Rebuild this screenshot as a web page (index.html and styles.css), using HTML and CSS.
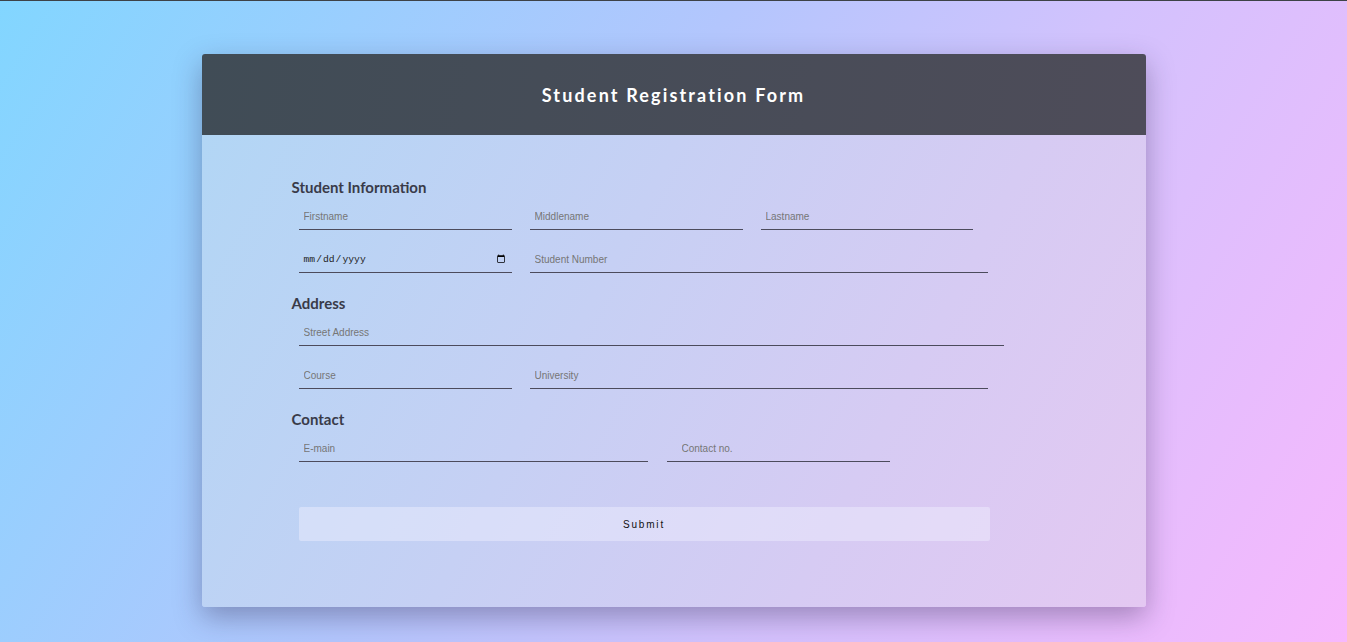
FILE: index.html
```html
<!DOCTYPE html>
<html lang="en">
<head>
<meta charset="utf-8">
<title>Student Registration Form</title>
<link rel="stylesheet" href="styles.css">
</head>
<body>
<div class="page">
  <div class="card">
    <div class="card-head">
      <h1 class="title">Student Registration Form</h1>
    </div>
    <form class="card-body">
      <h2 class="section">Student Information</h2>
      <div class="row">
        <input class="field w213" type="text" placeholder="Firstname">
        <input class="field w213" type="text" placeholder="Middlename">
        <input class="field w212" type="text" placeholder="Lastname">
      </div>
      <div class="row">
        <input class="field date w213" type="date">
        <input class="field w458" type="text" placeholder="Student Number">
      </div>
      <h2 class="section">Address</h2>
      <div class="row">
        <input class="field w705" type="text" placeholder="Street Address">
      </div>
      <div class="row">
        <input class="field w213" type="text" placeholder="Course">
        <input class="field w458" type="text" placeholder="University">
      </div>
      <h2 class="section">Contact</h2>
      <div class="row row-contact">
        <input class="field w349" type="text" placeholder="E-main">
        <input class="field field-wide-pad w223" type="text" placeholder="Contact no.">
      </div>
      <button class="submit" type="button">Submit</button>
    </form>
  </div>
</div>
</body>
</html>
```
FILE: styles.css
```css
* { box-sizing: border-box; }
html, body { margin: 0; padding: 0; }
body {
  border-top: 1px solid #3d4247;
  min-height: 642px;
  background: linear-gradient(122deg, #82d6ff 0%, #b3c6fd 42%, #d2c2fd 64%, #f7b8fd 100%);
  font-family: "Liberation Sans", Arial, sans-serif;
}
.page {
  padding-top: 53px;
  padding-bottom: 35px;
}
.card {
  width: 944px;
  margin: 0 auto;
  border-radius: 3px;
  overflow: hidden;
  box-shadow: 0 10px 28px rgba(40, 30, 70, 0.35);
}
.card-head {
  height: 81px;
  display: flex;
  align-items: center;
  justify-content: center;
  background: linear-gradient(100deg, #404c56 0%, #4e4c59 100%);
}
.title {
  margin: 0;
  color: #ffffff;
  font-family: "Lato", "Open Sans", sans-serif;
  font-weight: 700;
  font-size: 18px;
  letter-spacing: 2.15px;
}
.card-body {
  display: flex;
  flex-direction: column;
  align-items: flex-start;
  height: 472px;
  padding: 43px 0 0 90px;
  background: linear-gradient(118deg, #b2d6f5 0%, #c6d0f4 40%, #d6cbf3 70%, #e4c8f2 100%);
}
.section {
  margin: 0 0 7px 0;
  height: 18px;
  line-height: 18px;
  font-family: "Lato", "Open Sans", sans-serif;
  font-weight: 700;
  font-size: 15px;
  color: #393b49;
}
.row {
  display: flex;
  gap: 18px;
  margin-left: 7px;
  margin-bottom: 16px;
}
.row + .section { margin-top: 5px; }
.row-contact { gap: 19px; margin-bottom: 0; }
.field {
  height: 27px;
  padding: 0 5px;
  border: none;
  border-bottom: 1px solid #4c4b5c;
  background: transparent;
  font-family: "Liberation Sans", Arial, sans-serif;
  font-size: 10px;
  color: #333;
  outline: none;
}
.field-wide-pad { padding-left: 15px; }
.field::placeholder { color: #767676; }
.date {
  font-family: "Liberation Mono", monospace;
  font-size: 9.7px;
  color: #222;
  padding-left: 4px;
  padding-right: 4px;
}
.w212 { width: 212px; }
.w213 { width: 213px; }
.w223 { width: 223px; }
.w349 { width: 349px; }
.w458 { width: 458px; }
.w705 { width: 705px; }
.submit {
  margin: 45px 0 0 7px;
  width: 691px;
  height: 34px;
  border: none;
  border-radius: 2px;
  background: rgba(240, 240, 255, 0.45);
  font-family: "Liberation Sans", Arial, sans-serif;
  font-size: 10px;
  letter-spacing: 1.8px;
  color: #111;
  cursor: pointer;
}
```
